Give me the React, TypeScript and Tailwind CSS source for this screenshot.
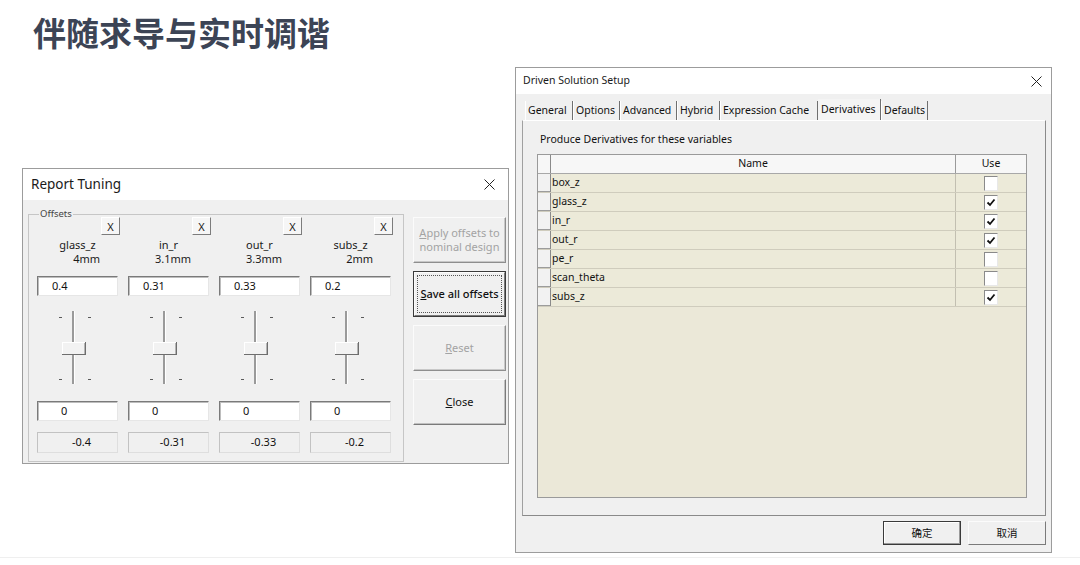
import React from "react";

function CloseX() {
  return (
    <svg width="11" height="11" viewBox="0 0 11 11" fill="none">
      <path d="M0.5 0.5 L10.5 10.5 M10.5 0.5 L0.5 10.5" stroke="#222" strokeWidth="1" />
    </svg>
  );
}

function Slider() {
  return (
    <svg width="81" height="76" viewBox="0 0 81 76">
      <g stroke="#5a5a5a" strokeWidth="1">
        <line x1="22" y1="7.5" x2="25" y2="7.5" />
        <line x1="51" y1="7.5" x2="54" y2="7.5" />
        <line x1="22" y1="69.5" x2="25" y2="69.5" />
        <line x1="51" y1="69.5" x2="54" y2="69.5" />
      </g>
      <rect x="35" y="1" width="2" height="73" fill="#9a9a9a" />
      <rect x="37" y="1" width="1" height="73" fill="#ffffff" />
      <rect x="25" y="32" width="24" height="13" fill="#f2f2f2" />
      <line x1="25" y1="32.5" x2="48" y2="32.5" stroke="#ffffff" />
      <line x1="25.5" y1="32" x2="25.5" y2="44" stroke="#ffffff" />
      <line x1="48.5" y1="32" x2="48.5" y2="45" stroke="#6e6e6e" />
      <line x1="25" y1="44.5" x2="49" y2="44.5" stroke="#6e6e6e" />
      <line x1="47.5" y1="33" x2="47.5" y2="44" stroke="#b4b4b4" />
    </svg>
  );
}

const cols = [
  { name: "glass_z", val: "4mm", a: "0.4", r: "-0.4" },
  { name: "in_r", val: "3.1mm", a: "0.31", r: "-0.31" },
  { name: "out_r", val: "3.3mm", a: "0.33", r: "-0.33" },
  { name: "subs_z", val: "2mm", a: "0.2", r: "-0.2" },
];

function Column({ c }: { c: (typeof cols)[number] }) {
  return (
    <div className="w-[81px] flex flex-col">
      <div className="h-[18px] flex justify-end -mr-[2px]">
        <div className="w-[19px] h-[18px] bg-[#f6f6f6] border border-t-[#ffffff] border-l-[#ffffff] border-r-[#7c7c7c] border-b-[#7c7c7c] flex items-center justify-center text-[11px] leading-none text-[#222]">
          X
        </div>
      </div>
      <div className="mt-[3px] text-center text-[11px] leading-[14px] text-[#1a1a1a]">{c.name}</div>
      <div className="w-[63px] text-right text-[11px] leading-[14px] text-[#1a1a1a]">{c.val}</div>
      <div className="mt-[10px] h-[20px] bg-white border border-t-[#7a7a7a] border-l-[#7a7a7a] border-r-[#e6e6e6] border-b-[#e6e6e6] shadow-[inset_1px_1px_0_#bdbdbd] flex items-center pl-[14px] text-[11px] text-[#111]">
        {c.a}
      </div>
      <div className="mt-[14px] h-[76px]">
        <Slider />
      </div>
      <div className="mt-[15px] h-[20px] bg-white border border-t-[#7a7a7a] border-l-[#7a7a7a] border-r-[#e6e6e6] border-b-[#e6e6e6] shadow-[inset_1px_1px_0_#bdbdbd] flex items-center pl-[23px] text-[11px] text-[#111]">
        0
      </div>
      <div className="mt-[11px] h-[21px] bg-[#f0f0f0] border border-t-[#c2c2c2] border-l-[#c2c2c2] border-r-[#dedede] border-b-[#dedede] flex items-center justify-center pl-[8px] text-[11px] text-[#111]">
        {c.r}
      </div>
    </div>
  );
}

function Btn3D({ children, disabled }: { children: React.ReactNode; disabled?: boolean }) {
  return (
    <div
      className={
        disabled
          ? "w-[93px] h-[46px] bg-[#f0f0f0] border border-t-[#fbfbfb] border-l-[#fbfbfb] border-r-[#8e8e8e] border-b-[#8e8e8e] shadow-[inset_-1px_-1px_0_#c8c8c8] flex items-center justify-center text-center text-[11px] leading-[14px] text-[#a3a3a3]"
          : "w-[93px] h-[46px] bg-[#f0f0f0] border border-t-[#fbfbfb] border-l-[#fbfbfb] border-r-[#7a7a7a] border-b-[#7a7a7a] shadow-[inset_-1px_-1px_0_#c0c0c0] flex items-center justify-center text-center text-[11px] leading-[14px] text-[#111]"
      }
    >
      {children}
    </div>
  );
}

function ReportTuning() {
  return (
    <div className="absolute left-[22px] top-[168px] w-[487px] h-[296px] border border-[#9c9c9c] bg-[#f0f0f0] flex flex-col font-['Noto_Sans',sans-serif]">
      <div className="h-[31px] bg-white flex items-center justify-between pl-[8px] pr-[13px]">
        <span className="text-[13.5px] text-[#1a1a1a]">Report Tuning</span>
        <CloseX />
      </div>
      <div className="flex items-start pl-[5px] pt-[14px]">
        <div className="relative w-[376px] h-[248px] border border-[#c6c6c6] pl-[8px] pt-[2px] flex gap-[10px]">
          <div className="absolute left-[10px] -top-[7px] bg-[#f0f0f0] px-[1px] text-[9.5px] leading-[12px] text-[#444]">
            Offsets
          </div>
          {cols.map((c) => (
            <Column key={c.name} c={c} />
          ))}
        </div>
        <div className="ml-[9px] mt-[3px] flex flex-col gap-[8px]">
          <Btn3D disabled>
            <span>
              <span className="underline">A</span>pply offsets to
              <br />
              nominal design
            </span>
          </Btn3D>
          <div className="w-[93px] h-[46px] border border-[#3a3a3a] bg-[#f0f0f0] flex">
            <div className="flex-1 border border-t-[#fbfbfb] border-l-[#fbfbfb] border-r-[#7a7a7a] border-b-[#7a7a7a] p-[2px] flex">
              <div className="flex-1 border border-dotted border-[#555] flex items-center justify-center text-[11px] font-medium text-[#111]">
                <span>
                  <span className="underline">S</span>ave all offsets
                </span>
              </div>
            </div>
          </div>
          <Btn3D disabled>
            <span>
              <span className="underline">R</span>eset
            </span>
          </Btn3D>
          <Btn3D>
            <span>
              <span className="underline">C</span>lose
            </span>
          </Btn3D>
        </div>
      </div>
    </div>
  );
}

const tabs = [
  { t: "General", w: "w-[48px]" },
  { t: "Options", w: "w-[47px]" },
  { t: "Advanced", w: "w-[57px]" },
  { t: "Hybrid", w: "w-[43px]" },
  { t: "Expression Cache", w: "w-[98px]" },
  { t: "Derivatives", w: "w-[63px]", sel: true },
  { t: "Defaults", w: "w-[47px]" },
];

const rows = [
  { n: "box_z", c: false },
  { n: "glass_z", c: true },
  { n: "in_r", c: true },
  { n: "out_r", c: true },
  { n: "pe_r", c: false },
  { n: "scan_theta", c: false },
  { n: "subs_z", c: true },
];

function CheckBox({ checked }: { checked: boolean }) {
  return (
    <div className="w-[14px] h-[15px] bg-white border border-t-[#8a8a8a] border-l-[#8a8a8a] border-r-[#e8e8e8] border-b-[#e8e8e8] flex items-center justify-center">
      {checked && (
        <svg width="10" height="9" viewBox="0 0 10 9">
          <path d="M1.5 4.5 L4 7 L8.5 1.5" stroke="#111" strokeWidth="1.8" fill="none" />
        </svg>
      )}
    </div>
  );
}

function DrivenSetup() {
  return (
    <div className="absolute left-[515px] top-[67px] w-[537px] h-[486px] border border-[#9c9c9c] bg-[#f0f0f0] flex flex-col font-['Noto_Sans',sans-serif]">
      <div className="h-[26px] bg-white flex items-center justify-between pl-[7px] pr-[9px]">
        <span className="text-[10.5px] text-[#1a1a1a]">Driven Solution Setup</span>
        <CloseX />
      </div>
      <div className="flex flex-col pl-[6px] pr-[5px]">
        <div className="mt-[5px] h-[21px] flex items-end pl-[3px]">
          {tabs.map((t) =>
            t.sel ? (
              <div
                key={t.t}
                className={`${t.w} h-[21px] bg-[#f4f4f4] border-r border-[#6f6f6f] flex items-center pl-[3px] text-[10.5px] whitespace-nowrap text-[#111]`}
              >
                {t.t}
              </div>
            ) : (
              <div
                key={t.t}
                className={`${t.w} h-[19px] border-r border-[#6f6f6f] shadow-[inset_1px_0_0_#ffffff] flex items-center pl-[3px] text-[10.5px] whitespace-nowrap text-[#111]`}
              >
                {t.t}
              </div>
            )
          )}
        </div>
        <div className="h-[396px] border border-t-[#ffffff] border-l-[#a0a0a0] border-r-[#8a8a8a] border-b-[#8a8a8a] pl-[14px] pt-[11px] flex flex-col">
          <div className="pl-[3px] text-[10.5px] leading-[14px] text-[#111]">Produce Derivatives for these variables</div>
          <div className="mt-[8px] w-[490px] h-[344px] border border-[#9a9a9a] bg-[#ebe8d8] flex flex-col">
            <div className="h-[19px] flex bg-[#f7f7f7] border-b border-[#a8a8a8] text-[10.5px] text-[#111]">
              <div className="w-[13px] border-r border-[#8a8a8a]" />
              <div className="w-[405px] border-r border-[#9a9a9a] flex items-center justify-center">Name</div>
              <div className="flex-1 flex items-center justify-center">Use</div>
            </div>
            {rows.map((r) => (
              <div key={r.n} className="h-[19px] flex bg-[#ecead9] border-b border-[#cfccbd] text-[10.5px] text-[#111]">
                <div className="w-[13px] bg-[#f2f2f2] border-r border-[#8a8a8a] shadow-[inset_0_-1px_0_#9c9c9c]" />
                <div className="w-[405px] border-r border-[#c2bfb1] flex items-center pl-[1px]">{r.n}</div>
                <div className="flex-1 flex items-center justify-center">
                  <CheckBox checked={r.c} />
                </div>
              </div>
            ))}
          </div>
        </div>
        <div className="mt-[5px] flex justify-end gap-[7px] font-['Noto_Sans_CJK_SC',sans-serif] text-[10.5px] text-[#111]">
          <div className="w-[78px] h-[24px] bg-[#f0f0f0] border border-[#3a3a3a] shadow-[inset_-1px_-1px_0_#9a9a9a,inset_1px_1px_0_#ffffff] flex items-center justify-center">
            确定
          </div>
          <div className="w-[78px] h-[24px] bg-[#f0f0f0] border border-t-[#fbfbfb] border-l-[#fbfbfb] border-r-[#7a7a7a] border-b-[#7a7a7a] flex items-center justify-center">
            取消
          </div>
        </div>
      </div>
    </div>
  );
}

export default function App() {
  return (
    <div className="relative w-[1080px] h-[565px] bg-white overflow-hidden">
      <h1 className="pl-[33px] pt-[14px] font-['Noto_Sans_CJK_SC',sans-serif] font-bold text-[33px] leading-[36px] text-[#3c4455]">
        伴随求导与实时调谐
      </h1>
      <ReportTuning />
      <DrivenSetup />
      <div className="absolute left-0 right-0 top-[557px] h-px bg-[#efefef]" />
    </div>
  );
}
